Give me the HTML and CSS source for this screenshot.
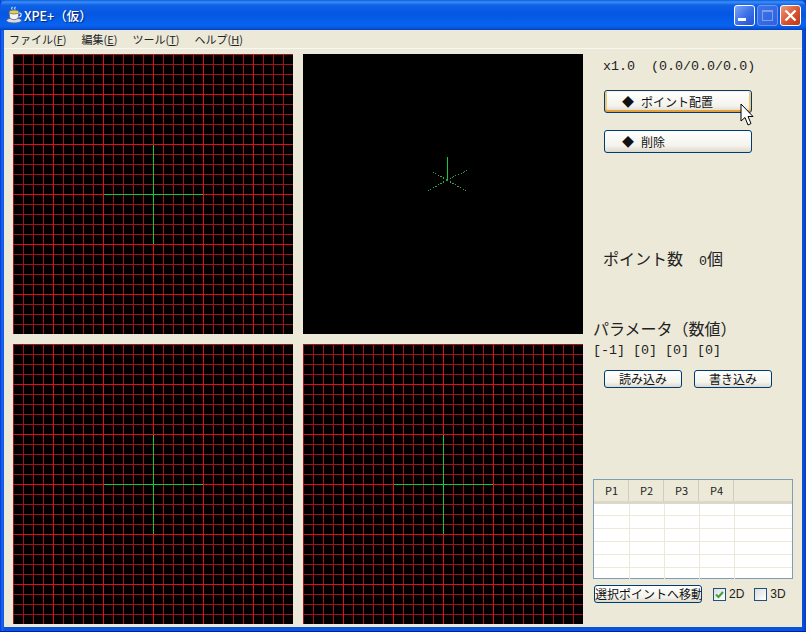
FILE: index.html
```html
<!DOCTYPE html>
<html lang="ja">
<head>
  <meta charset="UTF-8">
  <title>XPE+（仮）</title>
  <link rel="stylesheet" href="styles.css">
</head>
<body>
  <div class="window">

    <!-- Title bar -->
    <div class="titlebar">
      <svg class="app-icon" width="18" height="18" viewBox="0 0 18 18">
        <ellipse cx="9" cy="14.5" rx="7.5" ry="2.5" fill="#d8dce4" stroke="#5a6478" stroke-width="0.8"/>
        <path d="M4 6 L4.8 12 Q9 15.5 13.2 12 L14 6 Z" fill="#f4f4f4" stroke="#5a6478" stroke-width="0.8"/>
        <ellipse cx="9" cy="6" rx="5" ry="2" fill="#e0cf50" stroke="#5a6478" stroke-width="0.7"/>
        <path d="M14 7 Q17.5 7 15.5 10.5 L13.5 11" fill="none" stroke="#f0f0f0" stroke-width="1.2"/>
        <path d="M7 3.5 Q6 2 7.5 0.8 M10 3.5 Q9 2 10.5 0.8" fill="none" stroke="#ffffff" stroke-width="1"/>
      </svg>
      <span class="title">XPE+（仮）</span>
      <div class="caption-buttons">
        <div class="caption-btn">
          <svg width="21" height="21" viewBox="0 0 21 21"><rect x="4" y="13" width="8" height="3" fill="#fff"/></svg>
        </div>
        <div class="caption-btn disabled">
          <svg width="21" height="21" viewBox="0 0 21 21"><rect x="5.5" y="5.5" width="10" height="10" fill="none" stroke="#7f9fe6"/><rect x="5" y="5" width="11" height="2" fill="#7f9fe6"/></svg>
        </div>
        <div class="caption-btn close">
          <svg width="21" height="21" viewBox="0 0 21 21"><path d="M5.5 5.5 L15.5 15.5 M15.5 5.5 L5.5 15.5" stroke="#fff" stroke-width="2.4"/></svg>
        </div>
      </div>
    </div>

    <!-- Menu -->
    <div class="menubar">
      <span class="menu-item">ファイル(<u>F</u>)</span>
      <span class="menu-item">編集(<u>E</u>)</span>
      <span class="menu-item">ツール(<u>T</u>)</span>
      <span class="menu-item">ヘルプ(<u>H</u>)</span>
    </div>

    <div class="client">

      <!-- Viewports -->
      <div class="views">
        <div class="view grid">
          <svg width="280" height="280"><path class="axis" d="M91 140.5 H190 M140.5 91 V190"/></svg>
        </div>
        <div class="view">
          <svg width="280" height="280">
            <path class="axis" d="M144.5 103 V126"/>
            <path class="axis dotted" d="M144 126 L123 138 M144 126 L165 138 M144 126 L128 117 M144 126 L165 116"/>
          </svg>
        </div>
        <div class="view grid">
          <svg width="280" height="280"><path class="axis" d="M91 140.5 H190 M140.5 91 V190"/></svg>
        </div>
        <div class="view grid">
          <svg width="280" height="280"><path class="axis" d="M91 140.5 H190 M140.5 91 V190"/></svg>
        </div>
      </div>

      <!-- Right panel -->
      <div class="panel">
        <div class="label indent"><span class="mono">x1.0&nbsp;&nbsp;(0.0/0.0/0.0)</span></div>

        <button class="btn wide focused"><span class="diamond">◆</span>ポイント配置</button>
        <button class="btn wide second"><span class="diamond">◆</span>削除</button>

        <div class="label indent points">ポイント数　<span class="mono">0</span>個</div>

        <div class="label params">パラメータ（数値）</div>
        <div class="label values"><span class="mono">[-1] [0] [0] [0]</span></div>

        <div class="io-buttons">
          <button class="btn small">読み込み</button>
          <button class="btn small">書き込み</button>
        </div>

        <div class="table-box">
          <table class="list">
            <thead>
              <tr><th>P1</th><th>P2</th><th>P3</th><th>P4</th><th class="rest"></th></tr>
            </thead>
            <tbody>
              <tr><td></td><td></td><td></td><td></td><td></td></tr>
              <tr><td></td><td></td><td></td><td></td><td></td></tr>
              <tr><td></td><td></td><td></td><td></td><td></td></tr>
              <tr><td></td><td></td><td></td><td></td><td></td></tr>
              <tr><td></td><td></td><td></td><td></td><td></td></tr>
              <tr><td></td><td></td><td></td><td></td><td></td></tr>
            </tbody>
          </table>
        </div>

        <div class="bottom-row">
          <button class="btn move">選択ポイントへ移動</button>
          <span class="check checked">
            <svg width="13" height="13" viewBox="0 0 13 13"><path d="M3 6.5 L5.5 9 L10 4" fill="none" stroke="#3fa142" stroke-width="2"/></svg>
          </span>
          <span class="check-label">2D</span>
          <span class="check second-check"></span>
          <span class="check-label">3D</span>
        </div>
      </div>
    </div>

    <!-- Mouse pointer over the first button -->
    <svg class="cursor" width="14" height="24" viewBox="0 0 14 24">
      <path d="M1 1 V18 L5 14.5 L8 22 L11 20.5 L8 13.5 L13 13.5 Z" fill="#fff" stroke="#000" stroke-width="1"/>
    </svg>
  </div>
</body>
</html>
```

FILE: styles.css
```css
body {
  margin: 0;
  background-color: #0831d9;
  font-family: "Noto Sans CJK JP", sans-serif;
  color: #111;
  overflow: hidden;
}

.window {
  position: relative;
  box-sizing: border-box;
  width: 806px;
  height: 632px;
  padding: 0 4px 4px;
  background: linear-gradient(to right, #0831d9 0, #166aee 2px, #0855dd 4px, #0855dd 802px, #0b3bc0 806px);
  border-bottom: 1px solid #001ea0;
  display: flex;
  flex-direction: column;
}

.titlebar {
  flex: none;
  height: 30px;
  margin: 0 -4px;
  padding: 0 5px 0 5px;
  display: flex;
  align-items: center;
  border-radius: 7px 7px 0 0;
  background: linear-gradient(to bottom, #0a5ce0 0, #3c8ff5 2px, #0f62e6 5px, #0556e2 14px, #0663ef 24px, #0b5ce6 27px, #0342c2 30px);
}

.app-icon {
  flex: none;
  margin-right: 1px;
}

.title {
  color: white;
  font-size: 12.5px;
  font-weight: 500;
  text-shadow: 1px 1px 1px #06226f;
}

.caption-buttons {
  margin-left: auto;
  display: flex;
  gap: 2px;
}

.caption-btn {
  width: 21px;
  height: 21px;
  border: 1px solid #fff;
  border-radius: 3px;
  box-sizing: border-box;
  background: linear-gradient(135deg, #7ea4f4, #3a6ee8 55%, #2452d0);
}

.caption-btn svg {
  display: block;
  margin: -1px;
}

.caption-btn.disabled {
  border-color: #6f94ea;
  background: linear-gradient(135deg, #3f74ea, #2c62e0);
}

.caption-btn.close {
  background: linear-gradient(135deg, #eb9a80, #d9532f 55%, #b8391a);
}

.menubar {
  flex: none;
  height: 18px;
  box-sizing: border-box;
  display: flex;
  align-items: center;
  padding-left: 5px;
  gap: 15px;
  background-color: #ece9d8;
  font-size: 11px;
  line-height: 18px;
  color: #222;
}

.client {
  flex: 1;
  min-height: 0;
  display: flex;
  gap: 10px;
  padding: 5px 0 0 9px;
  background-color: #ece9d8;
  border-top: 1px solid #f8f7f0;
}

.views {
  flex: none;
  display: grid;
  grid-template-columns: 280px 280px;
  grid-auto-rows: 280px;
  gap: 10px;
  align-content: start;
}

.view {
  background-color: black;
}

.view svg {
  display: block;
}

.grid {
  background-image:
    linear-gradient(to right, #e60d14 1px, transparent 1px),
    linear-gradient(to bottom, #e60d14 1px, transparent 1px),
    linear-gradient(to right, #a31218 1px, transparent 1px),
    linear-gradient(to bottom, #a31218 1px, transparent 1px);
  background-size: 50px 50px, 50px 50px, 10px 10px, 10px 10px;
  background-position: 40px 0, 0 40px, 0 0, 0 0;
}

.axis {
  fill: none;
  stroke: #12c83c;
  stroke-width: 1;
  shape-rendering: crispEdges;
}

.axis.dotted {
  stroke: #2fa84a;
  stroke-dasharray: 1.5 1.5;
}

.panel {
  flex: none;
  width: 200px;
  display: flex;
  flex-direction: column;
  align-items: flex-start;
}

.label {
  height: 18px;
  font-size: 16px;
  line-height: 18px;
  white-space: nowrap;
  color: #222;
}

.mono {
  font-family: "Liberation Mono", monospace;
  font-size: 13.35px;
}

.indent {
  padding-left: 10px;
}

.points {
  margin-top: 96px;
}

.params {
  margin-top: 52px;
}

.values {
  margin-top: 1px;
}

.btn {
  box-sizing: border-box;
  padding: 0;
  font-family: inherit;
  font-size: 12px;
  line-height: 16px;
  color: #111;
  border: 1px solid #003c74;
  border-radius: 3px;
  background: linear-gradient(to bottom, #fff, #f4f3ec 70%, #dcd8cc);
}

.wide {
  width: 148px;
  height: 23px;
  margin: 18px 0 0 11px;
  text-align: left;
  padding-left: 17px;
}

.wide.second {
  margin-top: 17px;
}

.focused {
  box-shadow: inset 0 1px 0 #fff0cf, inset 0 -2px 0 #e5a03a, inset 2px 0 0 #f0c878, inset -2px 0 0 #f0c878;
}

.diamond {
  display: inline-block;
  width: 19px;
  font-size: 12px;
}

.io-buttons {
  display: flex;
  gap: 12px;
  margin: 14px 0 0 11px;
}

.small {
  width: 78px;
  height: 18px;
}

.table-box {
  box-sizing: border-box;
  width: 200px;
  height: 100px;
  margin-top: 91px;
  border: 1px solid #7f9db9;
  background: white;
}

.list {
  width: 198px;
  table-layout: fixed;
  border-collapse: collapse;
}

.list th {
  width: 35px;
  height: 22px;
  box-sizing: border-box;
  padding: 0;
  font-size: 11px;
  font-weight: normal;
  color: #222;
  background: #ece9d8;
  border-bottom: 3px solid #dcd8c8;
  box-shadow: inset -1px 0 0 #d0cdbc;
  background-clip: padding-box;
}

.list th.rest {
  width: auto;
  box-shadow: none;
}

.list td {
  height: 13px;
  box-sizing: border-box;
  padding: 0;
  border-right: 1px solid #ece9d8;
  border-bottom: 1px solid #ece9d8;
}

.list td:last-child {
  border-right: none;
}

.bottom-row {
  display: flex;
  align-items: center;
  margin-top: 6px;
  height: 18px;
  padding-left: 1px;
}

.move {
  width: 108px;
  height: 18px;
  font-size: 12px;
  white-space: nowrap;
  overflow: hidden;
}

.check {
  box-sizing: border-box;
  flex: none;
  width: 13px;
  height: 13px;
  margin-left: 11px;
  border: 1px solid #1c5180;
  background: linear-gradient(135deg, #dcdcd7, #fff);
}

.check svg {
  display: block;
  margin: -1px;
}

.second-check {
  margin-left: 10px;
}

.check-label {
  margin-left: 3px;
  font-family: "Liberation Sans", sans-serif;
  font-size: 12px;
  color: #222;
}

.cursor {
  position: absolute;
  left: 740px;
  top: 103px;
}
```
